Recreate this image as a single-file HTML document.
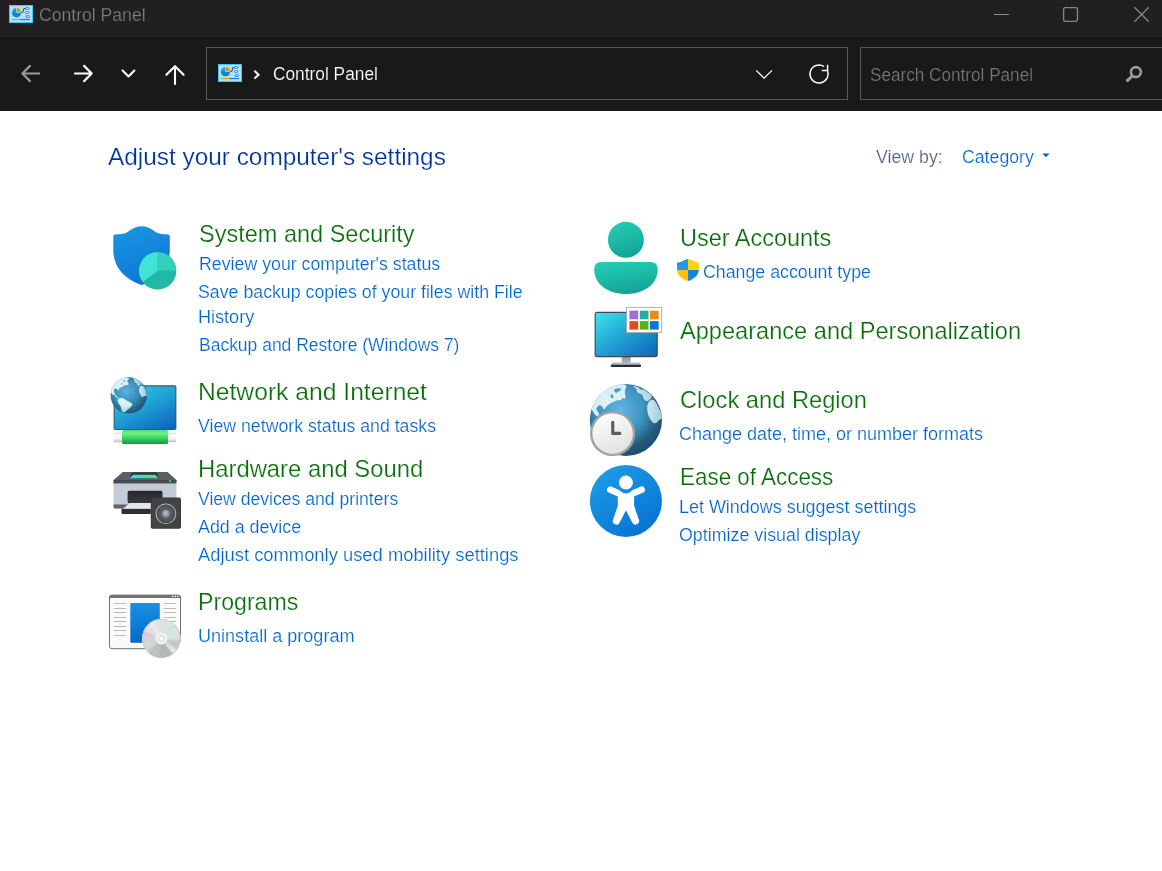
<!DOCTYPE html>
<html><head><meta charset="utf-8"><title>Control Panel</title>
<style>
html,body{margin:0;padding:0;}
body{width:1162px;height:871px;overflow:hidden;background:#ffffff;position:relative;font-family:"Liberation Sans",sans-serif;}
#titlebar{position:absolute;left:0;top:0;width:1162px;height:37px;background:#202020;}
#navbar{position:absolute;left:0;top:37px;width:1162px;height:74px;background:#191919;}
#addr{position:absolute;left:206px;top:47px;width:640px;height:51px;border:1px solid #585858;}
#search{position:absolute;left:860px;top:47px;width:301px;height:51px;border:1px solid #585858;border-right:none;}
.t{position:absolute;white-space:nowrap;transform-origin:0 0;line-height:1;-webkit-text-stroke:0.2px #ffffff;}
.t.h{-webkit-text-stroke:0.24px #ffffff;}
.t.dk{-webkit-text-stroke:0.2px #191919;}
.t.wh{-webkit-text-stroke:0.15px #191919;}
.t.dk2{-webkit-text-stroke:0.25px #202020;}
svg#ov{position:absolute;left:0;top:0;}
</style></head><body>
<div id="titlebar"></div><div id="navbar"></div><div id="addr"></div><div id="search"></div>
<div class="t dk2" id="t_title" style="left:39.02px;top:5.76px;font-size:18px;color:#808080;transform:scaleX(0.9774)">Control Panel</div>
<div class="t wh" id="t_addr" style="left:273.21px;top:64.76px;font-size:18px;color:#ffffff;transform:scaleX(0.9613)">Control Panel</div>
<div class="t dk" id="t_search" style="left:869.72px;top:65.76px;font-size:18px;color:#767676;transform:scaleX(0.9527)">Search Control Panel</div>
<div class="t h" id="t_adjust" style="left:108.04px;top:144.68px;font-size:24px;color:#003399;transform:scaleX(1.0154)">Adjust your computer's settings</div>
<div class="t" id="t_viewby" style="left:876.00px;top:148.00px;font-size:18px;color:#4c607a;transform:scaleX(0.9866)">View by:</div>
<div class="t" id="t_cat" style="left:961.71px;top:148.00px;font-size:18px;color:#0066cc;transform:scaleX(0.9830)">Category</div>
<div class="t h" id="h_sys" style="left:198.86px;top:221.68px;font-size:24px;color:#0a6e0a;transform:scaleX(0.9795)">System and Security</div>
<div class="t" id="l_sys1" style="left:198.50px;top:254.88px;font-size:18px;color:#0066cc;transform:scaleX(0.9861)">Review your computer's status</div>
<div class="t" id="l_sys2" style="left:198.46px;top:282.76px;font-size:18px;color:#0066cc;transform:scaleX(0.9860)">Save backup copies of your files with File</div>
<div class="t" id="l_sys3" style="left:198.45px;top:307.86px;font-size:18px;color:#0066cc;transform:scaleX(1.0035)">History</div>
<div class="t" id="l_sys4" style="left:198.56px;top:335.76px;font-size:18px;color:#0066cc;transform:scaleX(0.9713)">Backup and Restore (Windows 7)</div>
<div class="t h" id="h_net" style="left:197.93px;top:379.68px;font-size:24px;color:#0a6e0a;transform:scaleX(1.0275)">Network and Internet</div>
<div class="t" id="l_net1" style="left:198.21px;top:416.88px;font-size:18px;color:#0066cc;transform:scaleX(0.9845)">View network status and tasks</div>
<div class="t h" id="h_hw" style="left:198.06px;top:456.74px;font-size:24px;color:#0a6e0a;transform:scaleX(0.9929)">Hardware and Sound</div>
<div class="t" id="l_hw1" style="left:198.21px;top:489.91px;font-size:18px;color:#0066cc;transform:scaleX(0.9777)">View devices and printers</div>
<div class="t" id="l_hw2" style="left:198.33px;top:517.80px;font-size:18px;color:#0066cc;transform:scaleX(0.9902)">Add a device</div>
<div class="t" id="l_hw3" style="left:198.24px;top:545.80px;font-size:18px;color:#0066cc;transform:scaleX(1.0204)">Adjust commonly used mobility settings</div>
<div class="t h" id="h_prog" style="left:198.47px;top:589.83px;font-size:24px;color:#0a6e0a;transform:scaleX(0.9643)">Programs</div>
<div class="t" id="l_prog1" style="left:198.07px;top:626.76px;font-size:18px;color:#0066cc;transform:scaleX(1.0026)">Uninstall a program</div>
<div class="t h" id="h_user" style="left:679.62px;top:225.68px;font-size:24px;color:#0a6e0a;transform:scaleX(0.9778)">User Accounts</div>
<div class="t" id="l_user1" style="left:702.72px;top:262.76px;font-size:18px;color:#0066cc;transform:scaleX(0.9873)">Change account type</div>
<div class="t h" id="h_app" style="left:680.24px;top:318.68px;font-size:24px;color:#0a6e0a;transform:scaleX(0.9831)">Appearance and Personalization</div>
<div class="t h" id="h_clock" style="left:680.13px;top:387.68px;font-size:24px;color:#0a6e0a;transform:scaleX(0.9868)">Clock and Region</div>
<div class="t" id="l_clock1" style="left:679.46px;top:424.76px;font-size:18px;color:#0066cc;transform:scaleX(0.9999)">Change date, time, or number formats</div>
<div class="t h" id="h_ease" style="left:679.62px;top:464.68px;font-size:24px;color:#0a6e0a;transform:scaleX(0.9342)">Ease of Access</div>
<div class="t" id="l_ease1" style="left:678.68px;top:497.76px;font-size:18px;color:#0066cc;transform:scaleX(0.9966)">Let Windows suggest settings</div>
<div class="t" id="l_ease2" style="left:679.31px;top:525.81px;font-size:18px;color:#0066cc;transform:scaleX(0.9905)">Optimize visual display</div>
<svg id="ov" width="1162" height="871" viewBox="0 0 1162 871">
<defs><linearGradient id="gPie" x1="0" y1="0" x2="0" y2="1"><stop offset="0" stop-color="#22a2ea"/><stop offset="1" stop-color="#0876d0"/></linearGradient></defs>
<g transform="translate(9,5)">
<rect x="0" y="0" width="24" height="18" fill="#3fc6ff"/>
<rect x="1" y="1" width="22" height="16" fill="#b3e0f5"/>
<circle cx="7.5" cy="7.65" r="4.6" fill="url(#gPie)"/>
<path d="M7.2,7.8 L7.2,2.4 L12.8,2.4 L12.8,7.8 Z" fill="#b3e0f5"/>
<path d="M7.9,7.1 L7.9,2.9 A4.2,4.2 0 0 1 12.1,7.1 Z" fill="#f08c00"/>
<path d="M12.2,7.5 L13.3,7.5 C14.7,7.5 14.1,3.5 15.5,3.5 L16.8,3.5" stroke="#174a9a" stroke-width="1.2" fill="none"/>
<ellipse cx="18.4" cy="3.5" rx="2.2" ry="1.3" fill="#1a86dc"/><ellipse cx="18.4" cy="3.5" rx="1.1" ry="0.5" fill="#ffffff"/>
<ellipse cx="18.1" cy="7.5" rx="2.2" ry="1.3" fill="#1a86dc"/><ellipse cx="18.1" cy="7.5" rx="1.1" ry="0.5" fill="#ffffff"/>
<ellipse cx="18.7" cy="11.6" rx="2.2" ry="1.3" fill="#1a86dc"/><ellipse cx="18.7" cy="11.6" rx="1.1" ry="0.5" fill="#ffffff"/>
<rect x="3" y="14.1" width="8" height="1" fill="#f08c00"/>
<rect x="11.2" y="14.1" width="9.8" height="1" fill="#0b6fd0"/>
</g>
<g transform="translate(218,64)">
<rect x="0" y="0" width="24" height="18" fill="#3fc6ff"/>
<rect x="1" y="1" width="22" height="16" fill="#b3e0f5"/>
<circle cx="7.5" cy="7.65" r="4.6" fill="url(#gPie)"/>
<path d="M7.2,7.8 L7.2,2.4 L12.8,2.4 L12.8,7.8 Z" fill="#b3e0f5"/>
<path d="M7.9,7.1 L7.9,2.9 A4.2,4.2 0 0 1 12.1,7.1 Z" fill="#f08c00"/>
<path d="M12.2,7.5 L13.3,7.5 C14.7,7.5 14.1,3.5 15.5,3.5 L16.8,3.5" stroke="#174a9a" stroke-width="1.2" fill="none"/>
<ellipse cx="18.4" cy="3.5" rx="2.2" ry="1.3" fill="#1a86dc"/><ellipse cx="18.4" cy="3.5" rx="1.1" ry="0.5" fill="#ffffff"/>
<ellipse cx="18.1" cy="7.5" rx="2.2" ry="1.3" fill="#1a86dc"/><ellipse cx="18.1" cy="7.5" rx="1.1" ry="0.5" fill="#ffffff"/>
<ellipse cx="18.7" cy="11.6" rx="2.2" ry="1.3" fill="#1a86dc"/><ellipse cx="18.7" cy="11.6" rx="1.1" ry="0.5" fill="#ffffff"/>
<rect x="3" y="14.1" width="8" height="1" fill="#f08c00"/>
<rect x="11.2" y="14.1" width="9.8" height="1" fill="#0b6fd0"/>
</g>

<!-- window controls -->
<rect x="994" y="14" width="15" height="1" fill="#8c8c8c"/>
<rect x="1063.6" y="7.6" width="13.9" height="13.8" rx="1.8" fill="none" stroke="#868686" stroke-width="1.35"/>
<path d="M1134.4,7.2 L1148.8,21.8 M1148.8,7.2 L1134.4,21.8" stroke="#868686" stroke-width="1.3" fill="none"/>
<!-- nav arrows -->
<path d="M39.2,73.5 L22.4,73.5 M30,65.9 L22.4,73.5 L30,81.1" stroke="#9a9a9a" stroke-width="2.2" fill="none" stroke-linecap="round" stroke-linejoin="round"/>
<path d="M75,73.5 L91.7,73.5 M84.1,65.9 L91.7,73.5 L84.1,81.1" stroke="#ffffff" stroke-width="2.2" fill="none" stroke-linecap="round" stroke-linejoin="round"/>
<path d="M122.6,70.6 L128.5,76.4 L134.4,70.6" stroke="#ffffff" stroke-width="2.1" fill="none" stroke-linecap="round" stroke-linejoin="round"/>
<path d="M175,84 L175,66.2 M166.4,74.8 L175,66.2 L183.6,74.8" stroke="#ffffff" stroke-width="2.1" fill="none" stroke-linecap="round" stroke-linejoin="round"/>
<!-- breadcrumb chevron -->
<path d="M254.4,70.8 L258.6,74.7 L254.4,78.6" stroke="#ffffff" stroke-width="2" fill="none"/>
<!-- address dropdown chevron -->
<path d="M756.2,70.4 L764.1,78.1 L772,70.4" stroke="#ffffff" stroke-width="1.3" fill="none"/>
<!-- refresh -->
<path d="M827.5,70.9 A9,9 0 1 1 824.1,66.5" stroke="#ffffff" stroke-width="1.5" fill="none"/>
<path d="M821.8,70.6 L827.6,70.6 L827.6,64.8" stroke="#ffffff" stroke-width="1.5" fill="none"/>
<!-- search icon -->
<circle cx="1135.9" cy="72.1" r="5" stroke="#9a9a9a" stroke-width="2.6" fill="none"/>
<path d="M1132,76.2 L1126.6,81.4" stroke="#9a9a9a" stroke-width="3" fill="none"/>
<!-- category triangle -->
<path d="M1042.3,153.5 L1049.6,153.5 L1045.95,157.3 Z" fill="#0066cc"/>
<!-- ===== System and Security ===== -->
<defs>
<linearGradient id="gShield" x1="0" y1="0" x2="0.35" y2="1"><stop offset="0" stop-color="#1c98e2"/><stop offset="1" stop-color="#0b78d6"/></linearGradient>
<linearGradient id="gMon1" x1="0.15" y1="0" x2="0.85" y2="1"><stop offset="0" stop-color="#2ecbe3"/><stop offset="0.5" stop-color="#1f9fd4"/><stop offset="1" stop-color="#0e68bf"/></linearGradient>
<linearGradient id="gGreen" x1="0" y1="0" x2="0" y2="1"><stop offset="0" stop-color="#52e070"/><stop offset="0.25" stop-color="#6cf482"/><stop offset="0.7" stop-color="#2cc45a"/><stop offset="1" stop-color="#109a40"/></linearGradient>
<linearGradient id="gPipe" x1="0" y1="0" x2="0" y2="1"><stop offset="0" stop-color="#e0e0e0"/><stop offset="0.3" stop-color="#ffffff"/><stop offset="0.7" stop-color="#ececec"/><stop offset="1" stop-color="#bababa"/></linearGradient>
<radialGradient id="gGlobeS" cx="0.42" cy="0.38" r="0.62"><stop offset="0" stop-color="#5cb4e2"/><stop offset="0.55" stop-color="#3a8cb8"/><stop offset="1" stop-color="#1d5878"/></radialGradient>
<radialGradient id="gLandS" gradientUnits="userSpaceOnUse" cx="125" cy="392" r="22"><stop offset="0" stop-color="#e8f7f9"/><stop offset="0.6" stop-color="#d6eef2"/><stop offset="1" stop-color="#9cc8d8"/></radialGradient>
<clipPath id="cGlobeS"><circle cx="128.7" cy="395.4" r="18.1"/></clipPath>
<linearGradient id="gBlueRect" x1="0" y1="0" x2="0" y2="1"><stop offset="0" stop-color="#1892e2"/><stop offset="1" stop-color="#0768c8"/></linearGradient>
<linearGradient id="gPanel" x1="0" y1="0" x2="1" y2="0"><stop offset="0" stop-color="#38e2ee"/><stop offset="1" stop-color="#52dc80"/></linearGradient>
<linearGradient id="gSlot" x1="0" y1="0" x2="0" y2="1"><stop offset="0" stop-color="#25292d"/><stop offset="1" stop-color="#383c40"/></linearGradient>
<radialGradient id="gSpk" cx="0.5" cy="0.5" r="0.5"><stop offset="0" stop-color="#6a6e72"/><stop offset="0.7" stop-color="#54585c"/><stop offset="1" stop-color="#45484b"/></radialGradient>
<radialGradient id="gDome" cx="0.45" cy="0.4" r="0.6"><stop offset="0" stop-color="#b8c4cc"/><stop offset="1" stop-color="#7c8890"/></radialGradient>
<filter id="fBlur" x="-20%" y="-20%" width="140%" height="140%"><feGaussianBlur stdDeviation="0.9"/></filter>
<clipPath id="cCD"><ellipse cx="161.35" cy="638.5" rx="19.1" ry="19.4"/></clipPath>
</defs>
<g id="ic-sys">
<path d="M113.3,236.2 Q113.3,234.4 115.2,234.4 C122,234.4 126,233.4 129,231 C133,227.8 137,226.2 141.6,226.2 C146.2,226.2 150.2,227.8 154.2,231 C157.2,233.4 161.2,234.4 168,234.4 Q169.8,234.4 169.8,236.2 L169.8,250 C169.8,267 159,278.5 143.2,284.6 Q141.6,285.2 140,284.6 C124.2,278.5 113.3,267 113.3,250 Z" fill="url(#gShield)"/>
<circle cx="157.6" cy="270.7" r="18.7" fill="#1fae9e"/>
<path d="M157.6,270.7 L157.6,252.2 A18.5,18.5 0 0 1 176.1,270.7 Z" fill="#34d0be"/>
<path d="M157.6,270.7 L176.1,270.7 A18.5,18.5 0 0 1 142.9,281.9 Z" fill="#22b8a6"/>
<path d="M157.6,270.7 L142.9,281.9 A18.5,18.5 0 0 1 157.6,252.2 Z" fill="#40e4d4"/>
</g>

<!-- ===== Network and Internet ===== -->
<g id="ic-net">
<rect x="113.7" y="432.6" width="62.7" height="9.6" rx="1.5" fill="url(#gPipe)"/>
<rect x="122" y="430" width="46" height="14" rx="1.5" fill="url(#gGreen)"/>
<rect x="113.6" y="385.2" width="62.8" height="44.8" rx="1.8" fill="#35566f"/>
<rect x="114.6" y="386.4" width="60.8" height="42.6" rx="0.8" fill="url(#gMon1)"/>
<circle cx="128.7" cy="395.4" r="18.1" fill="url(#gGlobeS)"/>
<g clip-path="url(#cGlobeS)" fill="url(#gLandS)">
<path d="M128.9,378.8 Q128.7,377.9 125.1,377.0 Q121.5,376.1 116.9,379.2 Q112.2,382.3 110.9,386.4 Q109.6,390.6 110.7,392.1 Q111.7,393.7 112.7,394.7 Q113.8,395.7 114.0,394.2 Q114.3,392.6 114.0,391.3 Q113.8,390.1 114.4,389.3 Q115.0,388.5 115.8,388.5 Q116.6,388.5 117.4,389.7 Q118.1,390.8 118.5,389.7 Q118.9,388.5 120.2,387.7 Q121.5,387.0 122.8,386.4 Q124.1,385.9 125.0,385.3 Q125.9,384.6 127.1,385.1 Q128.2,385.7 128.5,384.6 Q128.8,383.6 127.8,382.2 Q126.7,380.8 127.9,380.2 Q129.2,379.6 128.9,378.8 Z"/>
<path d="M113.4,390.6 Q113.8,390.1 114.1,391.9 Q114.5,393.7 115.4,394.7 Q116.3,395.7 117.0,396.6 Q117.6,397.5 118.3,398.1 Q118.9,398.6 118.4,398.7 Q117.9,398.8 116.9,397.8 Q115.8,396.8 114.8,395.5 Q113.8,394.2 113.4,392.6 Q113.0,391.1 113.4,390.6 Z"/>
<path d="M117.8,402.1 Q117.0,400.1 117.9,399.4 Q118.9,398.6 120.1,398.1 Q121.2,397.7 122.3,398.1 Q123.3,398.4 125.0,399.4 Q126.7,400.4 128.5,401.4 Q130.3,402.5 131.6,403.2 Q133.0,404.0 132.1,405.3 Q131.3,406.6 129.8,407.8 Q128.2,408.9 127.2,410.1 Q126.2,411.2 125.3,411.9 Q124.3,412.5 123.1,412.0 Q121.8,411.5 121.5,410.3 Q121.2,409.2 121.1,407.9 Q121.0,406.6 119.8,405.3 Q118.7,404.0 117.8,402.1 Z"/>
<path d="M139.2,388.3 Q139.5,386.5 140.6,386.0 Q141.7,385.4 142.7,385.8 Q143.7,386.2 144.5,387.9 Q145.3,389.5 146.1,391.6 Q146.8,393.7 146.8,395.0 Q146.8,396.3 145.7,396.0 Q144.5,395.7 143.6,396.6 Q142.8,397.4 142.0,396.7 Q141.1,396.0 140.4,394.7 Q139.7,393.4 139.3,391.7 Q139.0,390.1 139.2,388.3 Z"/>
<path d="M133.4,379.3 Q132.1,378.4 133.5,378.6 Q134.9,378.7 137.0,379.7 Q139.1,380.8 140.6,382.3 Q142.2,383.9 141.9,384.5 Q141.7,385.1 140.8,384.6 Q139.9,384.1 139.5,385.3 Q139.1,386.5 138.0,385.8 Q137.0,385.1 137.0,384.1 Q137.0,383.1 135.6,382.7 Q134.2,382.4 134.4,381.3 Q134.7,380.2 133.4,379.3 Z" opacity="0.85"/>
<path d="M121.4,384.2 Q121.0,383.3 121.5,383.1 Q122.0,382.8 122.4,383.5 Q122.8,384.1 122.3,384.6 Q121.8,385.1 121.4,384.2 Z" fill="#4c9cc8"/>
<path d="M123.4,381.4 Q123.1,380.8 124.1,380.5 Q125.1,380.2 125.4,380.8 Q125.6,381.3 124.7,381.7 Q123.8,382.0 123.4,381.4 Z" fill="#4c9cc8"/>
</g>
</g>

<!-- ===== Hardware and Sound ===== -->
<g id="ic-hw">
<path d="M121.5,508.2 L150.8,508.2 L150.8,513.9 L122.5,513.9 Q121.5,513.9 121.5,512.9 Z" fill="#2c3035"/>
<path d="M113.6,483 L176.4,483 L176.4,507 Q176.4,508.6 174.8,508.6 L115.2,508.6 Q113.6,508.6 113.6,507 Z" fill="#c3cbd5"/>
<path d="M113.6,504.4 L176.4,504.4 L176.4,507 Q176.4,508.6 174.8,508.6 L115.2,508.6 Q113.6,508.6 113.6,507 Z" fill="#5c6269"/>
<path d="M122.8,471.9 L167.6,471.9 L176.4,480 L176.4,483.2 L113.6,483.2 L113.6,480 Z" fill="#5a5f66"/>
<path d="M113.6,480 L176.4,480 L176.4,483.2 L113.6,483.2 Z" fill="#484c52"/>
<path d="M132.2,472.6 L156.6,472.6 L158.8,478.2 L129.2,478.2 Z" fill="#2e3237"/>
<path d="M133.4,474.8 L155.4,474.8 L158.6,478.2 L129.4,478.2 Z" fill="url(#gPanel)"/>
<circle cx="170.1" cy="481" r="1.2" fill="#2ad43c"/>
<rect x="127.6" y="490.8" width="34.9" height="12.6" rx="1.6" fill="url(#gSlot)"/>
<path d="M129.8,503 L152,503 L152,508.8 L122.8,508.8 Z" fill="#e6e6e6"/>
<rect x="150.8" y="497.6" width="30.2" height="31.2" rx="1.8" fill="#38393b"/>
<rect x="151.8" y="498.6" width="28.2" height="29.2" rx="1" fill="#424345"/>
<circle cx="165.9" cy="513.7" r="10.3" fill="#c8ccd0"/>
<circle cx="165.9" cy="513.7" r="9.5" fill="url(#gSpk)"/>
<circle cx="165.9" cy="513.7" r="3.7" fill="url(#gDome)"/>
</g>

<!-- ===== Programs ===== -->
<g id="ic-prog">
<rect x="109.5" y="595.3" width="71" height="53.4" rx="2.4" fill="#fafafa" stroke="#74706c" stroke-width="1"/>
<path d="M109.2,598 L109.2,597.4 Q109.2,594.8 111.8,594.8 L178.2,594.8 Q180.8,594.8 180.8,597.4 L180.8,598 Z" fill="#74706c"/>
<g fill="#ffffff"><rect x="172.2" y="595.8" width="1.4" height="1.2"/><rect x="174.6" y="595.8" width="1.4" height="1.2"/><rect x="177" y="595.8" width="1.4" height="1.2"/></g>
<g fill="#bcbcbc">
<rect x="113.9" y="603" width="12.2" height="1"/><rect x="113.9" y="608" width="12.2" height="1"/><rect x="113.9" y="612" width="12.2" height="1"/><rect x="113.9" y="617" width="12.2" height="1"/><rect x="113.9" y="621" width="12.2" height="1"/><rect x="113.9" y="626" width="12.2" height="1"/><rect x="113.9" y="630" width="12.2" height="1"/><rect x="113.9" y="635" width="12.2" height="1"/>
<rect x="163.7" y="603" width="12.3" height="1"/><rect x="163.7" y="608" width="12.3" height="1"/><rect x="163.7" y="612" width="12.3" height="1"/><rect x="163.7" y="617" width="12.3" height="1"/><rect x="163.7" y="621" width="12.3" height="1"/>
</g>
<rect x="130.3" y="603" width="29.5" height="39.8" rx="1.2" fill="url(#gBlueRect)"/>
<rect x="173" y="641.5" width="9" height="8.5" fill="#ffffff"/>
<ellipse cx="161.35" cy="638.5" rx="19.2" ry="19.5" fill="#dfe3e2"/>
<g clip-path="url(#cCD)"><g filter="url(#fBlur)">
<path d="M161.4,638.5 L185.3,640.6 L185.6,648.0 L180.3,653.3 Z" fill="#c2c6c5"/>
<path d="M161.4,638.5 L180.3,653.3 L179.8,656.9 L176.2,657.4 Z" fill="#eceeed"/>
<path d="M161.4,638.5 L176.2,657.4 L167.7,663.7 L157.2,662.1 Z" fill="#b3b7b6"/>
<path d="M161.4,638.5 L157.2,662.1 L149.2,661.5 L144.1,655.2 Z" fill="#bcc0bf"/>
<path d="M161.4,638.5 L144.1,655.2 L136.2,644.8 L138.3,631.9 Z" fill="#d3d7d6"/>
<path d="M161.4,638.5 L138.7,630.7 L139.7,624.1 L145.3,620.7 Z" fill="#dde1e0"/>
<path d="M161.4,638.5 L145.3,620.7 L147.2,616.7 L151.6,616.6 Z" fill="#e8ecec"/>
<path d="M161.4,638.5 L151.6,616.6 L165.5,612.8 L177.5,620.7 Z" fill="#dfe4e3"/>
<path d="M161.4,638.5 L179.2,622.4 L186.1,630.3 L185.3,640.6 Z" fill="#dde2e1"/>
<path d="M161.4,638.5 L138.0,633.3 L139.0,629.9 Z" fill="#f6a2ee"/>
<path d="M161.4,638.5 L177.1,620.4 L179.5,622.8 Z" fill="#aef0c4"/>
</g></g>
<ellipse cx="161.35" cy="638.5" rx="18.8" ry="19.1" fill="none" stroke="#c2c5c4" stroke-width="0.8"/>
<circle cx="161.4" cy="638.5" r="6" fill="#f4f6f5"/>
<circle cx="161.4" cy="638.5" r="4.2" fill="#e2e6e5"/>
<circle cx="161.4" cy="638.5" r="1.7" fill="#ffffff"/>
</g>
<defs>
<linearGradient id="gTeal" x1="0" y1="0" x2="0.3" y2="1"><stop offset="0" stop-color="#24ceb6"/><stop offset="0.5" stop-color="#1cbca8"/><stop offset="1" stop-color="#13a596"/></linearGradient>
<linearGradient id="gMon2" x1="0" y1="0" x2="1" y2="1"><stop offset="0" stop-color="#40e2ea"/><stop offset="0.45" stop-color="#22a8d6"/><stop offset="1" stop-color="#0d64ba"/></linearGradient>
<linearGradient id="gNeck" x1="0" y1="0" x2="0" y2="1"><stop offset="0" stop-color="#8a949e"/><stop offset="1" stop-color="#b2bac2"/></linearGradient>
<radialGradient id="gGlobeL" cx="0.42" cy="0.36" r="0.66"><stop offset="0" stop-color="#5eb8e4"/><stop offset="0.5" stop-color="#3e92bf"/><stop offset="0.82" stop-color="#22597b"/><stop offset="1" stop-color="#1b4e6d"/></radialGradient>
<clipPath id="cGlobeL"><circle cx="625.9" cy="420" r="36.1"/></clipPath>
<linearGradient id="gFace" x1="0" y1="0" x2="0.4" y2="1"><stop offset="0" stop-color="#ffffff"/><stop offset="1" stop-color="#e4e4e4"/></linearGradient>
<linearGradient id="gEase" x1="0.15" y1="0" x2="0.85" y2="1"><stop offset="0" stop-color="#1d9ee6"/><stop offset="1" stop-color="#0670d2"/></linearGradient>
<radialGradient id="gLand" gradientUnits="userSpaceOnUse" cx="618" cy="410" r="46"><stop offset="0" stop-color="#e8f7f9"/><stop offset="0.6" stop-color="#d4edf2"/><stop offset="1" stop-color="#9cc8d8"/></radialGradient>
</defs>

<!-- ===== User Accounts ===== -->
<g id="ic-user" fill="url(#gTeal)">
<circle cx="625.9" cy="239.8" r="18"/>
<path d="M601.4,262 L650.4,262 Q657.7,262 657.7,269.4 C657.7,284 644,293.9 625.9,293.9 C607.8,293.9 594.2,284 594.2,269.4 Q594.2,262 601.4,262 Z"/>
</g>

<!-- ===== Appearance ===== -->
<g id="ic-app">
<rect x="621.8" y="356" width="8.8" height="8" fill="url(#gNeck)"/>
<path d="M612.4,362.6 L639.6,362.6 L641,365 L610.8,365 Z" fill="#b4bcc4"/>
<rect x="610.8" y="364.8" width="30.2" height="2.1" rx="0.6" fill="#2b2f35"/>
<rect x="594.6" y="311.8" width="63.2" height="45.4" rx="2.6" fill="#3b4a57"/>
<rect x="595.7" y="313" width="61" height="43" rx="1.4" fill="url(#gMon2)"/>
<rect x="626.5" y="307.4" width="35.2" height="25" fill="#ffffff" stroke="#a9a9a9" stroke-width="0.9"/>
<rect x="629.4" y="310.7" width="8.8" height="8.6" fill="#9b6fd6"/><rect x="639.8" y="310.7" width="8.7" height="8.6" fill="#1fb0a0"/><rect x="650" y="310.7" width="8.7" height="8.6" fill="#f08a10"/>
<rect x="629.4" y="321.1" width="8.8" height="8.5" fill="#e04e14"/><rect x="639.8" y="321.1" width="8.7" height="8.5" fill="#52b414"/><rect x="650" y="321.1" width="8.7" height="8.5" fill="#0a78d4"/>
</g>

<!-- ===== Clock and Region ===== -->
<g id="ic-clock">
<circle cx="625.9" cy="420" r="36.1" fill="url(#gGlobeL)"/>
<g clip-path="url(#cGlobeL)" fill="url(#gLand)">
<path d="M626.4,386.4 Q627.0,385.2 622.0,383.6 Q617.0,382.1 610.1,384.5 Q603.2,386.9 597.4,393.1 Q591.5,399.3 590.1,403.4 Q588.8,407.6 590.3,408.3 Q591.9,408.9 592.5,410.7 Q593.2,412.4 594.3,413.8 Q595.3,415.1 596.3,415.8 Q597.4,416.4 598.5,415.4 Q599.6,414.5 599.0,413.4 Q598.4,412.3 597.3,410.9 Q596.2,409.6 596.6,408.3 Q597.0,406.9 598.4,405.8 Q599.8,404.8 601.2,405.7 Q602.5,406.5 603.4,408.4 Q604.3,410.3 604.8,408.9 Q605.3,407.6 606.3,406.5 Q607.4,405.4 609.4,404.1 Q611.5,402.7 613.2,402.1 Q614.9,401.4 616.7,400.6 Q618.4,399.8 619.4,400.3 Q620.5,400.8 621.5,399.2 Q622.5,397.6 623.6,398.3 Q624.6,399.1 625.2,398.2 Q625.8,397.2 625.2,394.8 Q624.6,392.4 625.2,390.1 Q625.8,387.7 626.4,386.4 Z"/>
<path d="M614.4,389.8 Q614.6,389.0 616.5,388.5 Q618.4,388.1 620.1,388.4 Q621.8,388.6 621.1,389.5 Q620.5,390.3 619.4,390.9 Q618.4,391.4 617.7,392.2 Q617.0,393.1 616.0,392.7 Q614.9,392.4 614.5,391.5 Q614.1,390.7 614.4,389.8 Z" fill="#4497c6"/>
<path d="M610.5,395.4 Q610.8,394.5 611.7,394.3 Q612.5,394.1 613.1,395.3 Q613.7,396.5 613.5,397.5 Q613.2,398.5 612.4,398.3 Q611.5,398.1 610.9,397.2 Q610.3,396.4 610.5,395.4 Z" fill="#4ba0ce"/>
<path d="M633.6,386.6 Q632.9,385.5 635.6,386.4 Q638.4,387.2 639.8,388.8 Q641.1,390.3 642.5,389.7 Q643.9,389.1 646.0,391.1 Q648.0,393.1 649.4,393.4 Q650.8,393.8 651.5,395.5 Q652.3,397.2 651.2,398.3 Q650.1,399.4 648.7,400.5 Q647.3,401.5 646.2,401.1 Q645.1,400.7 644.2,399.4 Q643.2,398.1 642.9,396.3 Q642.7,394.6 641.5,394.3 Q640.4,393.9 639.4,393.6 Q638.4,393.2 637.3,392.2 Q636.3,391.2 636.7,390.1 Q637.1,389.1 635.7,388.4 Q634.2,387.7 633.6,386.6 Z" opacity="0.9"/>
<path d="M648.7,402.1 Q650.1,400.1 651.2,399.7 Q652.3,399.3 653.7,400.0 Q655.1,400.7 657.1,404.8 Q659.2,408.9 660.8,412.4 Q662.5,415.8 662.3,417.4 Q662.2,418.9 660.7,419.2 Q659.2,419.4 658.4,420.8 Q657.7,422.2 656.0,423.0 Q654.2,423.8 652.9,422.6 Q651.5,421.4 649.9,418.6 Q648.4,415.8 647.7,412.7 Q647.0,409.6 647.2,406.9 Q647.3,404.1 648.7,402.1 Z"/>
</g>
<circle cx="612.6" cy="433.5" r="22.6" fill="#a2a2a2"/>
<circle cx="612.6" cy="433.5" r="20.2" fill="url(#gFace)"/>
<path d="M612.75,422.4 L612.75,433.4 L619.8,433.4" fill="none" stroke="#5c5c5c" stroke-width="3.1" stroke-linecap="round" stroke-linejoin="round"/>
</g>

<!-- ===== Ease of Access ===== -->
<g id="ic-ease">
<circle cx="625.9" cy="500.9" r="36" fill="url(#gEase)"/>
<circle cx="625.95" cy="482.6" r="7" fill="#ffffff"/>
<path d="M619,490.1 Q625.95,496.8 632.9,490.1 L640.8,486.5 A3.25,3.25 0 0 1 643.2,492.5 L634.1,496.4 L634.1,505.8 L638.8,519.4 A3.6,3.6 0 0 1 632.2,522.4 L625.95,510.2 L619.7,522.4 A3.6,3.6 0 0 1 613.1,519.4 L617.8,505.8 L617.8,496.4 L608.7,492.6 A3.25,3.25 0 0 1 611.1,486.6 Z" fill="#ffffff"/>
</g>

<!-- ===== UAC shield ===== -->
<g id="ic-uac">
<clipPath id="cUac"><path d="M677,262.6 C682,262.6 684.6,259 688,259 C691.4,259 694,262.6 699,262.6 L699,268 C699,275 694.6,279 688,281 C681.4,279 677,275 677,268 Z"/></clipPath>
<g clip-path="url(#cUac)">
<rect x="676" y="258" width="12" height="12" fill="#1f9be6"/>
<rect x="688" y="258" width="12" height="12" fill="#ffd500"/>
<rect x="676" y="270" width="12" height="12" fill="#ffc107"/>
<rect x="688" y="270" width="12" height="12" fill="#1387df"/>
</g>
</g>
</svg>
</body></html>
